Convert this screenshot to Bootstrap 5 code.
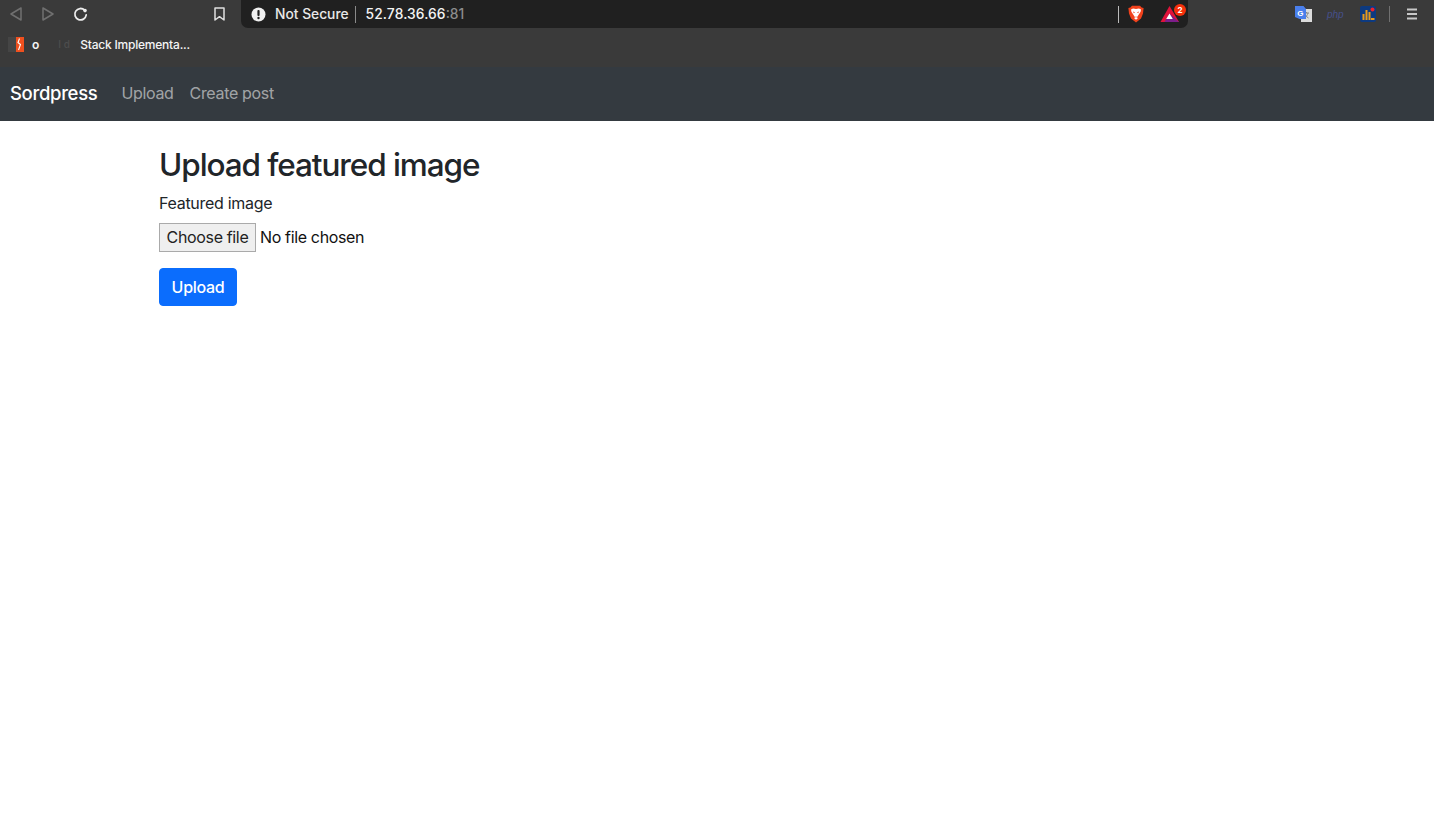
<!DOCTYPE html>
<html lang="en">
<head>
<meta charset="utf-8">
<title>Sordpress</title>
<link rel="stylesheet" href="https://cdn.jsdelivr.net/npm/bootstrap@5.3.0/dist/css/bootstrap.min.css">
<style>
html,body{height:100%}
body{font-family:Inter,"Liberation Sans",sans-serif;font-size:16px;color:#212529;background:#fff;overflow:hidden}
.chrome-bar{background:#3a3a3a;height:67px;color:#fff}
.tool-row{height:28px}
.tool-left{width:241px;padding-left:9px}
.tool-icon{display:block;flex:none}
.back-ic{margin-right:18px}
.fwd-ic{margin-right:18px}
.reload-ic{margin-right:126px}
.addr-box{width:947px;height:28px;background:#202020;border-radius:0 0 7px 7px;padding:0 0 0 10px;font-size:13.8px;font-weight:500;color:#e8e8e8}
.shield-ic{margin-right:9px}
.addr-sep{width:1px;height:17px;background:#8a8a8a}
.addr-sep-a{margin:0 10px 0 6px}
.addr-host{color:#f4f4f4;letter-spacing:.1px}
.addr-port{color:#8c8c8c}
.addr-sep-b{margin:0 9px 0 auto;background:#bbb}
.brave-ic{margin-right:16px}
.bat-wrap{position:relative;width:20px;height:20px;margin-right:8px}
.bat-count{position:absolute;top:0;right:-6px;width:12px;height:12px;border-radius:50%;background:#f5300b;color:#fff;font-size:8px;font-weight:700;line-height:12px;text-align:center}
.ext-zone{padding-left:107px}
.ext-g{margin-right:15px}
.ext-php{font-size:10px;font-style:italic;color:#46508c;width:18px;margin-right:15px;font-family:"Liberation Sans",sans-serif}
.ext-chart{margin-right:13px}
.ext-sep{width:1px;height:16px;background:#707070;margin-right:17px}
.book-row{height:39px;padding:0 0 6px 8px;font-size:12px;font-weight:500;color:#f4f4f4}
.book-first{margin:0 19px 0 8px;font-weight:600}
.book-blank{font-size:10px;color:#4d4d4d;margin-right:6px;width:16px}
.book-name{letter-spacing:-.22px}
.site-nav{height:54px;background:#343a40;padding:0 10px!important}
.site-nav .navbar-brand{font-size:18.5px;font-weight:500;letter-spacing:-.33px;margin-right:16px;padding:0;color:#fff}
.site-nav .nav-link{font-size:16px;letter-spacing:-.33px;color:rgba(255,255,255,.55);padding:7px 8px 9px!important}
.page-wrap{max-width:1140px}
.page-title{font-size:31.5px;font-weight:500;letter-spacing:-1.08px;line-height:38.4px;margin:25px 0 7px;color:#212529}
.form-lbl{display:block;margin-bottom:8px;line-height:24px;height:24px;letter-spacing:-.3px;color:#212529}
.file-line{height:29px;margin-bottom:16px;color:#111;letter-spacing:-.35px}
.file-note{line-height:29px;height:29px}
.file-pick{height:29px;width:97px;margin-right:4px;background:#efefef;border:1px solid #aaa;color:#222;text-align:center;line-height:26px;cursor:default}
.send-btn{width:78px;height:38px;padding:0;font-size:16px;font-weight:500;letter-spacing:-.3px;background-color:#0b6dfd;border-color:#0b6dfd;border-radius:4px}
</style>
</head>
<body>
<div class="chrome-bar">
  <div class="d-flex align-items-start tool-row">
    <div class="tool-left d-flex align-items-center" style="height:28px">
      <svg class="tool-icon back-ic" width="14" height="14" viewBox="0 0 14 14" fill="none" stroke="#707070" stroke-width="1.5" stroke-linejoin="round"><path d="M12 1V13L2 7Z"/></svg>
      <svg class="tool-icon fwd-ic" width="14" height="14" viewBox="0 0 14 14" fill="none" stroke="#707070" stroke-width="1.5" stroke-linejoin="round"><path d="M2 1V13L12 7Z"/></svg>
      <svg class="tool-icon reload-ic" width="15" height="15" viewBox="0 0 15 15" fill="none" stroke="#ececec" stroke-width="1.8" stroke-linecap="round"><path d="M11.6 3.2A5.7 5.7 0 1 0 13.2 8"/><circle cx="12" cy="3.6" r="1.8" fill="#ececec" stroke="none"/></svg>
      <svg class="tool-icon" width="11" height="14" viewBox="0 0 11 14" fill="none" stroke="#e0e0e0" stroke-width="1.5" stroke-linejoin="round"><path d="M1 1H10V13L5.5 9.7 1 13Z"/></svg>
    </div>
    <div class="addr-box d-flex align-items-center">
      <svg class="tool-icon shield-ic" width="15" height="15" viewBox="0 0 15 15"><circle cx="7.5" cy="7.5" r="7" fill="#f0f0f0"/><rect x="6.4" y="3" width="2.2" height="6" rx="1" fill="#202020"/><circle cx="7.5" cy="11" r="1.2" fill="#202020"/></svg>
      <span>Not Secure</span><span class="addr-sep addr-sep-a"></span>
      <span class="addr-host">52.78.36.66</span><span class="addr-port">:81</span>
      <span class="addr-sep addr-sep-b"></span>
      <svg class="tool-icon brave-ic" width="16" height="18" viewBox="0 0 16 18"><path d="M4 .8H12L13.6 2.6 15.6 3 15 8.5 13 13.5 8 17.4 3 13.5 1 8.5.4 3 2.4 2.6Z" fill="#f1421c"/><path d="M3 4.500 5 3.400 8 3.900 11 3.400 13 4.500 12.600 6.800 10.800 9.600 9.400 11.800H6.600L5.200 9.600 3.400 6.800Z" fill="#fff"/><path d="M5 6.500 7 7.200 5.800 8.200ZM11 6.500 9 7.200 10.200 8.200Z" fill="#f1421c"/><path d="M6 13 8 12 10 13 8 14.800Z" fill="#fff"/></svg>
      <div class="bat-wrap">
        <svg class="tool-icon" width="20" height="20" viewBox="0 0 20 20"><path d="M9.500 2 19 18H0.500Z" fill="#e0123a"/><path d="M9.500 9.500 19 18H4.500Z" fill="#7c1e8a"/><path d="M9.500 9.500 12.800 15H6.200Z" fill="#fff"/></svg>
        <span class="bat-count">2</span>
      </div>
    </div>
    <div class="ext-zone d-flex align-items-center" style="height:28px">
      <svg class="tool-icon ext-g" width="17" height="16" viewBox="0 0 17 16"><rect x="6" y="3" width="11" height="13" fill="#dcdcdc"/><path d="M9 7h5M11.500 6v1M13 7c-.5 2-2 4-3.500 5M10 8.500c.8 1.500 2 2.800 3.500 3.500" stroke="#888" fill="none" stroke-width="1"/><path d="M0 0H8.500L11 3V13H4.500L0 11Z" fill="#4a7fec"/><text x="5.300" y="9.500" fill="#fff" font-size="8" font-weight="700" text-anchor="middle" font-family="Liberation Sans,sans-serif">G</text></svg>
      <span class="ext-php">php</span>
      <svg class="tool-icon ext-chart" width="16" height="16" viewBox="0 0 16 16"><rect width="16" height="16" rx="2" fill="#0d3a80"/><rect x="2.500" y="8" width="2" height="6" fill="#e79a1c"/><rect x="5.500" y="4" width="2" height="10" fill="#e79a1c"/><rect x="8.500" y="6" width="2" height="8" fill="#e79a1c"/><rect x="11" y="12" width="3.500" height="2" fill="#e79a1c"/><circle cx="12.500" cy="3.500" r="2" fill="#f0212b"/></svg>
      <span class="ext-sep"></span>
      <svg class="tool-icon" width="10" height="12" viewBox="0 0 10 12" fill="#c8c8c8"><rect width="10" height="2" y="0.500"/><rect width="10" height="2" y="5"/><rect width="10" height="2" y="9.500"/></svg>
    </div>
  </div>
  <div class="d-flex align-items-center book-row">
    <svg class="tool-icon" width="16" height="16" viewBox="0 0 16 16"><rect x="0" y="0" width="8" height="15" fill="#454545"/><rect x="8" y="0" width="8" height="15" fill="#f0501e"/><path d="M11.500 1.500 10 5.500 12.500 7.500 10.500 13" fill="none" stroke="#fff" stroke-width="1.100"/></svg>
    <span class="book-first">o</span>
    <span class="book-blank">I d</span>
    <span class="book-name">Stack Implementa...</span>
  </div>
</div>
<nav class="navbar navbar-expand navbar-dark site-nav">
  <a class="navbar-brand" href="#">Sordpress</a>
  <ul class="navbar-nav">
    <li class="nav-item"><a class="nav-link" href="#">Upload</a></li>
    <li class="nav-item"><a class="nav-link" href="#">Create post</a></li>
  </ul>
</nav>
<main class="container page-wrap">
  <h2 class="page-title">Upload featured image</h2>
  <form onsubmit="return false">
    <label class="form-lbl" for="featured">Featured image</label>
    <div class="file-line d-flex align-items-center">
      <label class="file-pick" for="featured">Choose file</label>
      <span class="file-note">No file chosen</span>
      <input class="d-none" id="featured" type="file">
    </div>
    <button class="btn btn-primary send-btn" type="submit">Upload</button>
  </form>
</main>
</body>
</html>
